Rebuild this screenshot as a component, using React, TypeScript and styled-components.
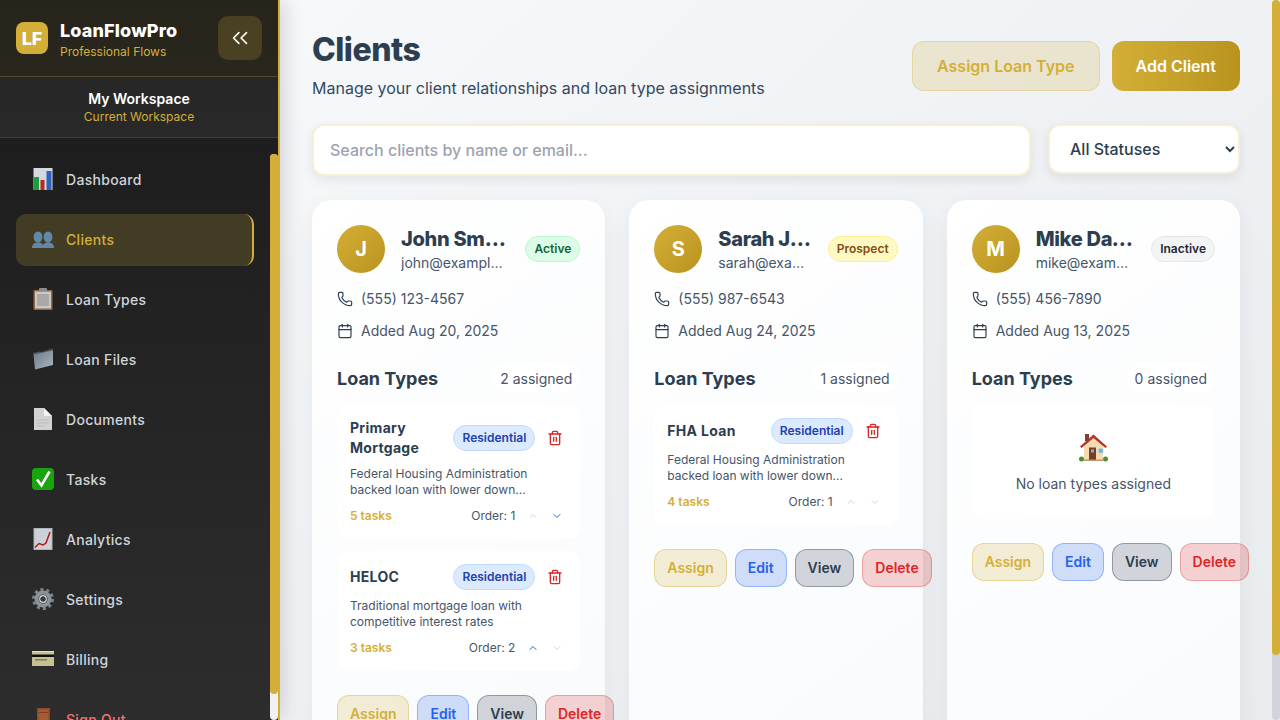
import type { ReactNode } from "react";
import styled, { createGlobalStyle } from "styled-components";
import { Calendar, ChevronDown, ChevronUp, ChevronsLeft, Phone, Trash2 } from "lucide-react";

const GOLD = "#d4af37";
const HEADING_FONT = `"Inter", "Liberation Sans", sans-serif`;

const ChartIcon = () => (
  <svg width="22" height="22" viewBox="0 0 22 22">
    <rect x="1.5" y="0" width="19" height="22" fill="#d5d9de" />
    <rect x="2" y="9" width="5" height="13" fill="#1f9d3f" />
    <rect x="8.5" y="12" width="4" height="10" fill="#c3251f" />
    <rect x="14.5" y="3" width="5" height="19" fill="#2b64bd" />
  </svg>
);

const PeopleIcon = () => (
  <svg width="22" height="22" viewBox="0 0 22 22">
    <g fill="#6288a8">
      <ellipse cx="6" cy="9" rx="4.4" ry="5.6" />
      <path d="M0 20c0-4 2.5-5.5 6-5.500s5.500 1.500 5.500 5.500z" />
      <ellipse cx="16" cy="9" rx="4.4" ry="5.6" />
      <path d="M10.500 20c0-4 2-5.500 5.500-5.500s6 1.500 6 5.500z" />
    </g>
  </svg>
);

const ClipboardIcon = () => (
  <svg width="22" height="22" viewBox="0 0 22 22">
    <rect x="1.5" y="2" width="19" height="20" rx="1" fill="#94683f" />
    <rect x="3" y="3.5" width="16" height="17" fill="#c9c9c9" />
    <rect x="5" y="6" width="12" height="12" fill="#a9a9a9" />
    <rect x="7" y="0" width="8" height="3.5" rx="1" fill="#8c8c8c" />
  </svg>
);

const FolderIcon = () => (
  <svg width="22" height="22" viewBox="0 0 22 22">
    <defs>
      <linearGradient id="folderFace" x1="0" y1="0" x2="1" y2="1">
        <stop offset="0" stopColor="#6f7d8a" />
        <stop offset="1" stopColor="#a9b4be" />
      </linearGradient>
    </defs>
    <path d="M1 5l7-1.500 1 .8L20.500 0.500 21 3 1.500 7z" fill="#4f5963" />
    <path d="M1.500 6.500L21 2.500V17L3 21.500z" fill="url(#folderFace)" />
  </svg>
);

const DocumentIcon = () => (
  <svg width="22" height="22" viewBox="0 0 22 22">
    <path d="M2 0h10l8 8v14H2z" fill="#d2d2d2" />
    <path d="M12 0l8 8h-8z" fill="#f2f2f2" />
    <path d="M5 12h12M5 15h12M5 18h8" stroke="#bdbdbd" strokeWidth="1" />
  </svg>
);

const CheckIcon = () => (
  <svg width="22" height="22" viewBox="0 0 22 22">
    <rect width="22" height="22" rx="4" fill="#18a30f" />
    <path d="M5 11.500l4.500 6L17.500 3.500" fill="none" stroke="#fff" strokeWidth="2.6" />
  </svg>
);

const TrendIcon = () => (
  <svg width="22" height="22" viewBox="0 0 22 22">
    <rect x="1.5" y="0" width="19" height="22" fill="#adb5be" />
    <rect x="2.5" y="1" width="17" height="20" fill="#ccd1d7" />
    <path d="M3 19.500l4-4 4 1.500 3-2 4-11" fill="none" stroke="#b3161b" strokeWidth="1.5" />
  </svg>
);

const GearIcon = () => (
  <svg width="22" height="22" viewBox="0 0 22 22">
    <circle cx="11" cy="11" r="9.5" fill="none" stroke="#7c838b" strokeWidth="3" strokeDasharray="3.1 2.87" />
    <circle cx="11" cy="11" r="6.5" fill="none" stroke="#8b929a" strokeWidth="4" />
    <circle cx="11" cy="11" r="3.2" fill="none" stroke="#d4d7da" strokeWidth="1.4" />
    <circle cx="11" cy="11" r="2.5" fill="#3a3d40" />
  </svg>
);

const CardIcon = () => (
  <svg width="22" height="22" viewBox="0 0 22 22">
    <rect x="0" y="3" width="22" height="15" fill="#c7c192" />
    <rect x="0" y="3" width="22" height="1" fill="#e4e0b8" />
    <rect x="0" y="6.5" width="22" height="2.5" fill="#111" />
    <rect x="3" y="11" width="12" height="1.5" fill="#7f7d63" />
  </svg>
);

const DoorIcon = () => (
  <svg width="22" height="22" viewBox="0 0 22 22">
    <rect x="5" y="0" width="13" height="22" fill="#8a4a2b" />
    <rect x="6.5" y="1.5" width="10" height="20" fill="#a65a35" />
    <rect x="6.5" y="4" width="10" height="1" fill="#7a4126" />
    <rect x="15" y="14" width="2.5" height="3" fill="#e0b93a" />
  </svg>
);

const HouseIcon = () => (
  <svg width="29" height="29" viewBox="0 0 29 29">
    <rect x="6" y="1" width="4" height="7" fill="#8c3a2e" />
    <ellipse cx="2.5" cy="26" rx="2.5" ry="2.5" fill="#4f8f2e" />
    <ellipse cx="26.5" cy="26" rx="2.5" ry="2.5" fill="#4f8f2e" />
    <path d="M5 12L14.500 4 24 12v15.500H5z" fill="#f5dcae" />
    <path d="M1 13.500L14.500 1.500 28 13.500l-1.500 1.500L14.500 5 2.500 15z" fill="#b3342c" />
    <rect x="10" y="14.5" width="7" height="13" fill="#7a3e24" />
    <rect x="12" y="16.5" width="3" height="3" fill="#6cb6dc" />
    <rect x="19" y="15" width="5.5" height="5.5" fill="#d8d8d8" />
    <rect x="19.8" y="15.8" width="3.9" height="3.9" fill="#6cb6dc" />
    <rect x="5" y="26.5" width="19" height="1.5" fill="#b59a72" />
  </svg>
);

const NAV_ITEMS: { icon: ReactNode; label: string; active?: boolean; danger?: boolean }[] = [
  { icon: <ChartIcon />, label: "Dashboard" },
  { icon: <PeopleIcon />, label: "Clients", active: true },
  { icon: <ClipboardIcon />, label: "Loan Types" },
  { icon: <FolderIcon />, label: "Loan Files" },
  { icon: <DocumentIcon />, label: "Documents" },
  { icon: <CheckIcon />, label: "Tasks" },
  { icon: <TrendIcon />, label: "Analytics" },
  { icon: <GearIcon />, label: "Settings" },
  { icon: <CardIcon />, label: "Billing" },
  { icon: <DoorIcon />, label: "Sign Out", danger: true },
];

type LoanType = {
  title: string;
  description: string;
  tasks: number;
  order: number;
  canMoveUp: boolean;
  canMoveDown: boolean;
};

type Client = {
  initial: string;
  name: string;
  email: string;
  status: "Active" | "Prospect" | "Inactive";
  phone: string;
  added: string;
  loans: LoanType[];
};

const CLIENTS: Client[] = [
  {
    initial: "J",
    name: "John Smith",
    email: "john@example.com",
    status: "Active",
    phone: "(555) 123-4567",
    added: "Added Aug 20, 2025",
    loans: [
      {
        title: "Primary Mortgage",
        description: "Federal Housing Administration backed loan with lower down...",
        tasks: 5,
        order: 1,
        canMoveUp: false,
        canMoveDown: true,
      },
      {
        title: "HELOC",
        description: "Traditional mortgage loan with competitive interest rates",
        tasks: 3,
        order: 2,
        canMoveUp: true,
        canMoveDown: false,
      },
    ],
  },
  {
    initial: "S",
    name: "Sarah Johnson",
    email: "sarah@example.com",
    status: "Prospect",
    phone: "(555) 987-6543",
    added: "Added Aug 24, 2025",
    loans: [
      {
        title: "FHA Loan",
        description: "Federal Housing Administration backed loan with lower down...",
        tasks: 4,
        order: 1,
        canMoveUp: false,
        canMoveDown: false,
      },
    ],
  },
  {
    initial: "M",
    name: "Mike Davis",
    email: "mike@example.com",
    status: "Inactive",
    phone: "(555) 456-7890",
    added: "Added Aug 13, 2025",
    loans: [],
  },
];

const STATUS_COLORS = {
  Active: { bg: "#dcfce7", fg: "#166534", border: "#bbf7d0" },
  Prospect: { bg: "#fef9c3", fg: "#854d0e", border: "#fef08a" },
  Inactive: { bg: "#f3f4f6", fg: "#1f2937", border: "#e5e7eb" },
};

const ACTION_COLORS = {
  gold: { bg: "rgba(212, 175, 55, 0.2)", fg: GOLD, border: "rgba(212, 175, 55, 0.4)" },
  blue: { bg: "rgba(37, 99, 235, 0.2)", fg: "#2563eb", border: "rgba(37, 99, 235, 0.35)" },
  slate: { bg: "rgba(44, 62, 80, 0.2)", fg: "#2c3e50", border: "rgba(44, 62, 80, 0.4)" },
  red: { bg: "rgba(220, 38, 38, 0.2)", fg: "#dc2626", border: "rgba(220, 38, 38, 0.3)" },
};

export default function App() {
  return (
    <>
      <GlobalStyle />
      <Layout>
        <Sidebar>
          <SidebarHeader>
            <Brand>
              <LogoMark>LF</LogoMark>
              <div>
                <BrandName>LoanFlowPro</BrandName>
                <BrandTag>Professional Flows</BrandTag>
              </div>
            </Brand>
            <CollapseButton type="button" aria-label="Collapse sidebar">
              <ChevronsLeft size={26} strokeWidth={1.5} />
            </CollapseButton>
          </SidebarHeader>
          <Workspace>
            <WorkspaceName>My Workspace</WorkspaceName>
            <WorkspaceHint>Current Workspace</WorkspaceHint>
          </Workspace>
          <NavPane>
            <Nav>
              {NAV_ITEMS.map((item) => (
                <NavItem key={item.label} $active={item.active} $danger={item.danger}>
                  <NavIcon>{item.icon}</NavIcon>
                  {item.label}
                </NavItem>
              ))}
            </Nav>
            <NavRail>
              <RailThumb $height={540} />
            </NavRail>
          </NavPane>
        </Sidebar>

        <MainPane>
          <Main>
            <PageHeader>
              <div>
                <PageTitle>Clients</PageTitle>
                <PageSubtitle>Manage your client relationships and loan type assignments</PageSubtitle>
              </div>
              <HeaderActions>
                <SoftButton type="button">Assign Loan Type</SoftButton>
                <PrimaryButton type="button">Add Client</PrimaryButton>
              </HeaderActions>
            </PageHeader>

            <Filters>
              <SearchInput placeholder="Search clients by name or email..." />
              <StatusSelect defaultValue="all">
                <option value="all">All Statuses</option>
              </StatusSelect>
            </Filters>

            <CardGrid>
              {CLIENTS.map((client) => (
                <ClientCard key={client.email} client={client} />
              ))}
            </CardGrid>
          </Main>
          <MainRail>
            <RailThumb $height={655} />
          </MainRail>
        </MainPane>
      </Layout>
    </>
  );
}

function ClientCard({ client }: { client: Client }) {
  return (
    <Card>
      <CardHeader>
        <Avatar>{client.initial}</Avatar>
        <Identity>
          <ClientName>{client.name}</ClientName>
          <ClientEmail>{client.email}</ClientEmail>
        </Identity>
        <StatusBadge $status={client.status}>{client.status}</StatusBadge>
      </CardHeader>

      <ContactRow>
        <Phone size={16} strokeWidth={1.75} />
        <ContactText>{client.phone}</ContactText>
      </ContactRow>
      <ContactRow>
        <Calendar size={16} strokeWidth={1.75} />
        <ContactText>{client.added}</ContactText>
      </ContactRow>

      <SectionHeader>
        <SectionTitle>Loan Types</SectionTitle>
        <AssignedCount>{client.loans.length} assigned</AssignedCount>
      </SectionHeader>

      {client.loans.length > 0 ? (
        <LoanList>
          {client.loans.map((loan) => (
            <LoanItem key={loan.title}>
              <LoanHeader>
                <LoanTitle>{loan.title}</LoanTitle>
                <TypeBadge>Residential</TypeBadge>
                <TrashButton type="button" aria-label="Remove">
                  <Trash2 size={16} />
                </TrashButton>
              </LoanHeader>
              <LoanDescription>{loan.description}</LoanDescription>
              <LoanFooter>
                <TaskCount>{loan.tasks} tasks</TaskCount>
                <OrderControls>
                  <OrderLabel>Order: {loan.order}</OrderLabel>
                  <OrderButton type="button" $enabled={loan.canMoveUp} aria-label="Move up">
                    <ChevronUp size={12} />
                  </OrderButton>
                  <OrderButton type="button" $enabled={loan.canMoveDown} aria-label="Move down">
                    <ChevronDown size={12} />
                  </OrderButton>
                </OrderControls>
              </LoanFooter>
            </LoanItem>
          ))}
        </LoanList>
      ) : (
        <EmptyLoans>
          <EmptyIcon>
            <HouseIcon />
          </EmptyIcon>
          <EmptyText>No loan types assigned</EmptyText>
        </EmptyLoans>
      )}

      <CardActions>
        <ActionButton type="button" $tone="gold">Assign</ActionButton>
        <ActionButton type="button" $tone="blue">Edit</ActionButton>
        <ActionButton type="button" $tone="slate">View</ActionButton>
        <ActionButton type="button" $tone="red">Delete</ActionButton>
      </CardActions>
    </Card>
  );
}

const GlobalStyle = createGlobalStyle`
  * {
    box-sizing: border-box;
  }

  html,
  body {
    margin: 0;
    height: 100%;
    overflow: hidden;
  }

  body {
    font-family: "Inter", "Liberation Sans", sans-serif;
    color: #2c3e50;
  }

  button {
    font-family: inherit;
    cursor: pointer;
  }
`;

const Layout = styled.div`
  display: flex;
  height: 100vh;
  background: linear-gradient(135deg, #f8fafc 0%, #e9ecef 100%);
`;

const Sidebar = styled.aside`
  width: 280px;
  flex-shrink: 0;
  display: flex;
  flex-direction: column;
  height: 100%;
  background: linear-gradient(180deg, #1a1a1a 0%, #2d2d2d 100%);
  border-right: 2px solid ${GOLD};
  box-shadow: 4px 0 20px rgba(0, 0, 0, 0.15);
  z-index: 2;
`;

const SidebarHeader = styled.div`
  height: 77px;
  flex-shrink: 0;
  display: flex;
  align-items: center;
  justify-content: space-between;
  padding: 0 16px;
  background: rgba(212, 175, 55, 0.07);
  border-bottom: 1px solid rgba(212, 175, 55, 0.25);
`;

const Brand = styled.div`
  display: flex;
  align-items: center;
  gap: 12px;
`;

const LogoMark = styled.div`
  width: 32px;
  height: 32px;
  display: flex;
  align-items: center;
  justify-content: center;
  border-radius: 8px;
  background: ${GOLD};
  color: #fff;
  font-size: 18px;
  font-weight: 800;
`;

const BrandName = styled.div`
  font-family: ${HEADING_FONT};
  font-size: 18px;
  font-weight: 800;
  line-height: 27px;
  letter-spacing: 0.15px;
  color: #fff;
`;

const BrandTag = styled.div`
  font-size: 12px;
  line-height: 16px;
  color: ${GOLD};
`;

const CollapseButton = styled.button`
  width: 44px;
  height: 44px;
  display: flex;
  align-items: center;
  justify-content: center;
  padding: 0;
  border: none;
  border-radius: 10px;
  background: rgba(212, 175, 55, 0.2);
  color: #fff;
`;

const Workspace = styled.div`
  height: 61px;
  flex-shrink: 0;
  display: flex;
  flex-direction: column;
  align-items: center;
  justify-content: center;
  background: rgba(255, 255, 255, 0.05);
  border-bottom: 1px solid rgba(255, 255, 255, 0.1);
`;

const WorkspaceName = styled.div`
  font-size: 14px;
  font-weight: 600;
  line-height: 20px;
  color: #fff;
`;

const WorkspaceHint = styled.div`
  font-size: 12px;
  line-height: 16px;
  color: ${GOLD};
`;

const NavPane = styled.div`
  position: relative;
  flex: 1;
  min-height: 0;
`;

const Nav = styled.nav`
  display: flex;
  flex-direction: column;
  gap: 8px;
  height: 100%;
  padding: 16px 24px 16px 16px;
  overflow-y: auto;
  scrollbar-width: none;
`;

const NavItem = styled.a<{ $active?: boolean; $danger?: boolean }>`
  display: flex;
  flex-shrink: 0;
  align-items: center;
  gap: 12px;
  height: 52px;
  padding: 0 16px 2px;
  border-radius: 10px;
  font-size: 14px;
  font-weight: 500;
  letter-spacing: 0.3px;
  color: ${({ $active, $danger }) => ($active ? GOLD : $danger ? "#f87171" : "#d1d5db")};
  background: ${({ $active }) => ($active ? "rgba(212, 175, 55, 0.2)" : "transparent")};
  border-right: 2px solid ${({ $active }) => ($active ? GOLD : "transparent")};
`;

const NavIcon = styled.span`
  display: flex;
  width: 22px;
  height: 22px;
  flex-shrink: 0;
`;

const NavRail = styled.div`
  position: absolute;
  top: 16px;
  right: 0;
  bottom: 0;
  width: 8px;
  border-radius: 4px;
  background: #f1f1f1;
`;

const RailThumb = styled.div<{ $height: number }>`
  height: ${({ $height }) => $height}px;
  border-radius: 4px;
  background: ${GOLD};
`;

const MainPane = styled.div`
  position: relative;
  flex: 1;
  min-width: 0;
  height: 100%;
`;

const MainRail = styled.div`
  position: absolute;
  top: 0;
  right: 0;
  bottom: 0;
  width: 8px;
  border-radius: 4px;
  background: #d1d5db;
`;

const Main = styled.main`
  height: 100%;
  padding: 32px 40px 32px 32px;
  overflow-y: auto;
  scrollbar-width: none;
`;

const PageHeader = styled.header`
  display: flex;
  align-items: center;
  justify-content: space-between;
  margin-bottom: 24px;
`;

const PageTitle = styled.h1`
  margin: 0 0 8px;
  font-family: ${HEADING_FONT};
  font-size: 32px;
  font-weight: 800;
  line-height: 36px;
  letter-spacing: -0.5px;
  color: #2c3e50;
`;

const PageSubtitle = styled.p`
  margin: 0;
  font-size: 16px;
  line-height: 24px;
  color: #34495e;
`;

const HeaderActions = styled.div`
  display: flex;
  gap: 12px;
`;

const SoftButton = styled.button`
  height: 50px;
  padding: 0 24px;
  border: 1px solid rgba(212, 175, 55, 0.3);
  border-radius: 12px;
  background: rgba(212, 175, 55, 0.2);
  color: ${GOLD};
  font-size: 16px;
  font-weight: 600;
`;

const PrimaryButton = styled.button`
  height: 50px;
  padding: 0 24px;
  border: none;
  border-radius: 12px;
  background: linear-gradient(90deg, ${GOLD} 0%, #b8941f 100%);
  color: #fff;
  font-size: 16px;
  font-weight: 600;
`;

const Filters = styled.div`
  display: flex;
  align-items: flex-start;
  gap: 17px;
  margin-bottom: 24px;
`;

const SearchInput = styled.input`
  flex: 1;
  min-width: 0;
  height: 52px;
  padding: 0 16px;
  border: 2px solid rgba(212, 175, 55, 0.2);
  border-radius: 12px;
  background: #fff;
  box-shadow: 0 4px 12px rgba(0, 0, 0, 0.08);
  font-family: inherit;
  font-size: 16px;
  font-weight: 500;
  color: #2c3e50;
  outline: none;

  &::placeholder {
    color: #9ca3af;
  }
`;

const StatusSelect = styled.select`
  width: 192px;
  height: 50px;
  padding: 0 16px;
  border: 2px solid rgba(212, 175, 55, 0.2);
  border-radius: 12px;
  background: #fff;
  box-shadow: 0 4px 12px rgba(0, 0, 0, 0.08);
  font-family: inherit;
  font-size: 16px;
  font-weight: 500;
  color: #2c3e50;
  outline: none;
`;

const CardGrid = styled.div`
  display: grid;
  grid-template-columns: repeat(3, minmax(0, 1fr));
  gap: 24px;
`;

const Card = styled.article`
  padding: 25px 25px 32px;
  border-radius: 20px;
  background: linear-gradient(145deg, #ffffff 0%, #f8fafc 100%);
  box-shadow: 0 8px 24px rgba(0, 0, 0, 0.06);
`;

const CardHeader = styled.div`
  display: flex;
  align-items: center;
  gap: 16px;
  margin-bottom: 16px;
`;

const Avatar = styled.div`
  width: 48px;
  height: 48px;
  flex-shrink: 0;
  display: flex;
  align-items: center;
  justify-content: center;
  border-radius: 50%;
  background: linear-gradient(135deg, ${GOLD} 0%, #b8941f 100%);
  color: #fff;
  font-size: 20px;
  font-weight: 700;
`;

const Identity = styled.div`
  flex: 1;
  min-width: 0;
`;

const ClientName = styled.div`
  overflow: hidden;
  white-space: nowrap;
  text-overflow: ellipsis;
  font-family: ${HEADING_FONT};
  font-size: 20px;
  font-weight: 800;
  line-height: 28px;
  letter-spacing: -0.3px;
  color: #2c3e50;
`;

const ClientEmail = styled.div`
  overflow: hidden;
  white-space: nowrap;
  text-overflow: ellipsis;
  font-size: 14px;
  line-height: 20px;
  color: #475569;
`;

const StatusBadge = styled.span<{ $status: Client["status"] }>`
  flex-shrink: 0;
  padding: 4px 8px;
  border: 1px solid ${({ $status }) => STATUS_COLORS[$status].border};
  border-radius: 13px;
  background: ${({ $status }) => STATUS_COLORS[$status].bg};
  color: ${({ $status }) => STATUS_COLORS[$status].fg};
  font-size: 12px;
  font-weight: 600;
  line-height: 16px;
`;

const ContactRow = styled.div`
  display: flex;
  align-items: center;
  gap: 8px;
  height: 20px;
  margin-bottom: 12px;
  font-size: 14px;
  line-height: 19px;
  color: #475569;

  svg {
    color: #2c3e50;
    flex-shrink: 0;
  }
`;

const ContactText = styled.span`
  margin-bottom: 2px;
`;

const SectionHeader = styled.div`
  display: flex;
  align-items: center;
  justify-content: space-between;
  margin: 24px 0 13px;
`;

const SectionTitle = styled.h3`
  margin: 0;
  font-family: ${HEADING_FONT};
  font-size: 18px;
  font-weight: 700;
  line-height: 27px;
  color: #2c3e50;
`;

const AssignedCount = styled.span`
  padding: 4px 8px;
  border-radius: 14px;
  background: #fff;
  font-size: 14px;
  line-height: 19px;
  color: #475569;
`;

const LoanList = styled.div`
  display: flex;
  flex-direction: column;
  gap: 12px;
`;

const LoanItem = styled.div`
  padding: 13px;
  border-radius: 12px;
  background: #fff;
`;

const LoanHeader = styled.div`
  display: flex;
  align-items: center;
  gap: 8px;
`;

const LoanTitle = styled.div`
  flex: 1;
  min-width: 0;
  font-family: ${HEADING_FONT};
  font-size: 14px;
  font-weight: 700;
  line-height: 20px;
  letter-spacing: 0.3px;
  color: #2c3e50;
`;

const TypeBadge = styled.span`
  flex-shrink: 0;
  padding: 4px 8px;
  border: 1px solid #bfdbfe;
  border-radius: 13px;
  background: #dbeafe;
  color: #1e40af;
  font-size: 12px;
  font-weight: 600;
  line-height: 16px;
`;

const TrashButton = styled.button`
  flex-shrink: 0;
  display: flex;
  padding: 4px;
  border: none;
  background: none;
  color: #dc2626;
`;

const LoanDescription = styled.p`
  margin: 8px 0;
  font-size: 12px;
  line-height: 16px;
  color: #475569;
`;

const LoanFooter = styled.div`
  display: flex;
  align-items: center;
  justify-content: space-between;
  height: 20px;
  line-height: 16px;
`;

const TaskCount = styled.span`
  padding-bottom: 1px;
  font-size: 12px;
  font-weight: 600;
  color: ${GOLD};
`;

const OrderControls = styled.div`
  display: flex;
  align-items: center;
  gap: 4px;
`;

const OrderLabel = styled.span`
  margin-right: 4px;
  padding-bottom: 1px;
  font-size: 12px;
  color: #475569;
`;

const OrderButton = styled.button<{ $enabled: boolean }>`
  display: flex;
  padding: 4px;
  border: none;
  background: none;
  color: ${({ $enabled }) => ($enabled ? "#2563eb" : "#d1d5db")};
`;

const EmptyLoans = styled.div`
  display: flex;
  flex-direction: column;
  align-items: center;
  padding: 24px 24px 25px;
  border-radius: 12px;
  background: #fff;
`;

const EmptyIcon = styled.div`
  display: flex;
  align-items: center;
  height: 37px;
  margin-bottom: 8px;
`;

const EmptyText = styled.div`
  font-size: 14px;
  line-height: 20px;
  color: #475569;
`;

const CardActions = styled.div`
  display: flex;
  gap: 8px;
  margin-top: 24px;
`;

const ActionButton = styled.button<{ $tone: keyof typeof ACTION_COLORS }>`
  flex-shrink: 0;
  height: 38px;
  padding: 0 12px 1px;
  border: 1px solid ${({ $tone }) => ACTION_COLORS[$tone].border};
  border-radius: 12px;
  background: ${({ $tone }) => ACTION_COLORS[$tone].bg};
  color: ${({ $tone }) => ACTION_COLORS[$tone].fg};
  font-size: 14px;
  font-weight: 600;
`;
